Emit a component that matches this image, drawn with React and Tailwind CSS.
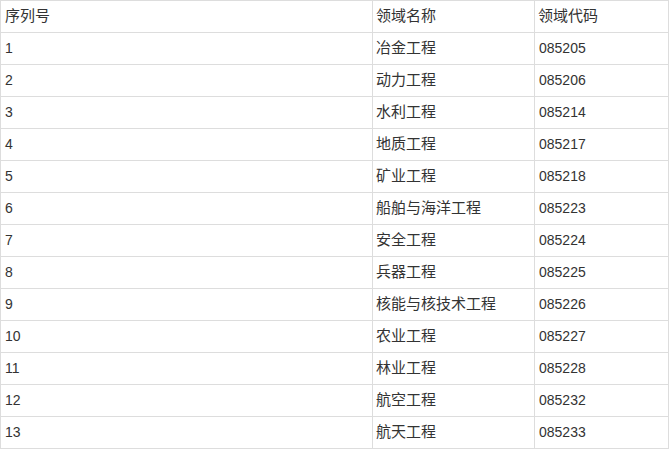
import React from "react"

const rows = [
  ["1", "冶金工程", "085205"],
  ["2", "动力工程", "085206"],
  ["3", "水利工程", "085214"],
  ["4", "地质工程", "085217"],
  ["5", "矿业工程", "085218"],
  ["6", "船舶与海洋工程", "085223"],
  ["7", "安全工程", "085224"],
  ["8", "兵器工程", "085225"],
  ["9", "核能与核技术工程", "085226"],
  ["10", "农业工程", "085227"],
  ["11", "林业工程", "085228"],
  ["12", "航空工程", "085232"],
  ["13", "航天工程", "085233"],
]

export default function App() {
  const cell = "border border-[#dddddd] h-[32px] pl-[3px] pr-1 text-left font-normal align-middle"
  return (
    <div className="bg-white w-[669px] h-[450px] font-['Liberation_Sans','Noto_Sans_CJK_SC',sans-serif] text-[14px] text-[#333333]">
      <table className="border-collapse w-[668px] table-fixed">
        <colgroup>
          <col className="w-[372px]" />
          <col className="w-[162px]" />
          <col className="w-[134px]" />
        </colgroup>
        <thead>
          <tr>
            <th className={`${cell} pl-[4px] text-[15px]`}>序列号</th>
            <th className={`${cell} text-[15px]`}>领域名称</th>
            <th className={`${cell} text-[15px]`}>领域代码</th>
          </tr>
        </thead>
        <tbody>
          {rows.map((r) => (
            <tr key={r[0]}>
              <td className={`${cell} pl-[4px]`}>{r[0]}</td>
              <td className={`${cell} text-[15px]`}>{r[1]}</td>
              <td className={`${cell} pl-[4px]`}>{r[2]}</td>
            </tr>
          ))}
        </tbody>
      </table>
    </div>
  )
}
